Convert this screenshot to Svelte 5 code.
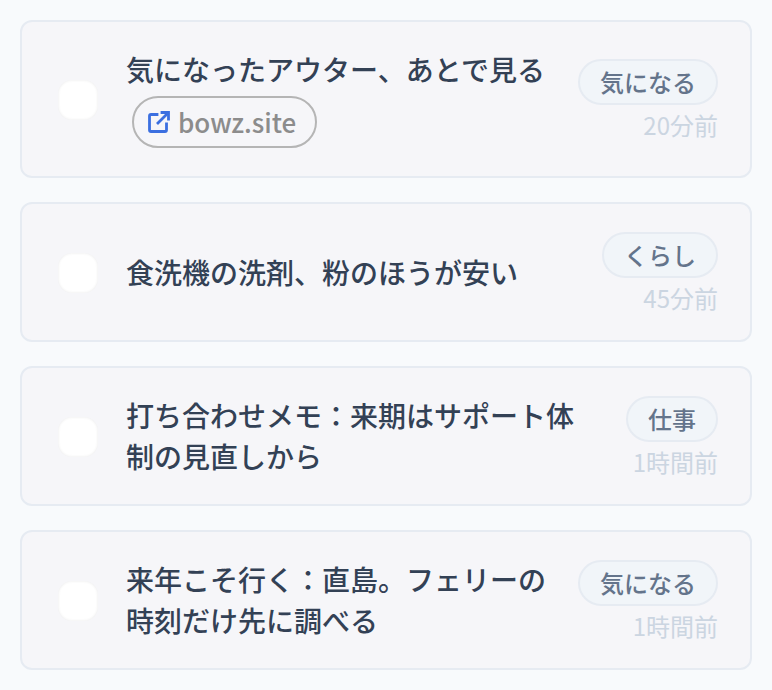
<script>
  const items = [
    { title: '気になったアウター、あとで見る', tag: '気になる', time: '20分前', link: 'bowz.site' },
    { title: '食洗機の洗剤、粉のほうが安い', tag: 'くらし', time: '45分前' },
    { title: '打ち合わせメモ：来期はサポート体制の見直しから', tag: '仕事', time: '1時間前' },
    { title: '来年こそ行く：直島。フェリーの時刻だけ先に調べる', tag: '気になる', time: '1時間前' }
  ];
</script>

<main class="list">
  {#each items as item}
    <article class="card">
      <div class="check"></div>
      <div class="body">
        <div class="title">{item.title}</div>
        {#if item.link}
          <div class="link">
            <svg viewBox="0 0 24 24" width="24" height="24" fill="none" stroke="#3b6fe0" stroke-width="2.8" stroke-linecap="square" stroke-linejoin="miter">
              <path d="M10 4.500H4a1.500 1.500 0 0 0-1.500 1.500V20A1.500 1.500 0 0 0 4 21.500H18a1.500 1.500 0 0 0 1.500-1.500V14" />
              <path d="M15 2.500h6.500V9" />
              <path d="M20.500 3.500 11 13" />
            </svg>
            <span>{item.link}</span>
          </div>
        {/if}
      </div>
      <div class="meta">
        <span class="tag">{item.tag}</span>
        <span class="time">{item.time}</span>
      </div>
    </article>
  {/each}
</main>

<style>
  :global(body) {
    margin: 0;
    background: #f8fafc;
  }
  .list {
    display: flex;
    flex-direction: column;
    gap: 24px;
    padding: 20px;
    font-family: "Noto Sans CJK JP", "Noto Sans", sans-serif;
  }
  .card {
    display: flex;
    align-items: center;
    gap: 28px;
    padding: 28px 32px 28px 36px;
    background: #f6f6f9;
    border: 2px solid #e6ebf2;
    border-radius: 12px;
  }
  .check {
    flex: none;
    width: 40px;
    height: 40px;
    margin-top: 2px;
    border-radius: 14px;
    background: #fff;
    box-shadow: inset 0 0 3px rgba(0, 0, 0, 0.09);
  }
  .body {
    flex: 1;
    min-width: 0;
    margin: -1px 0;
  }
  .title {
    font-size: 28px;
    line-height: 41px;
    font-weight: 500;
    color: #334155;
  }
  .link {
    display: inline-flex;
    align-items: center;
    gap: 7px;
    box-sizing: border-box;
    height: 52px;
    margin: 6px 0 1px 6px;
    padding: 0 19px 0 13px;
    border: 2px solid #b5b5b5;
    border-radius: 26px;
    font-size: 26px;
    line-height: 44px;
    font-weight: 500;
    color: #8c8c8c;
  }
  .meta {
    flex: none;
    display: flex;
    flex-direction: column;
    align-items: flex-end;
  }
  .tag {
    box-sizing: border-box;
    height: 46px;
    padding: 0 20px;
    line-height: 41px;
    font-size: 24px;
    font-weight: 500;
    color: #64748b;
    background: #f1f5f9;
    border: 2px solid #e6ebf2;
    border-radius: 23px;
  }
  .time {
    height: 34px;
    line-height: 40px;
    font-size: 24px;
    color: #cbd5e1;
  }
</style>
